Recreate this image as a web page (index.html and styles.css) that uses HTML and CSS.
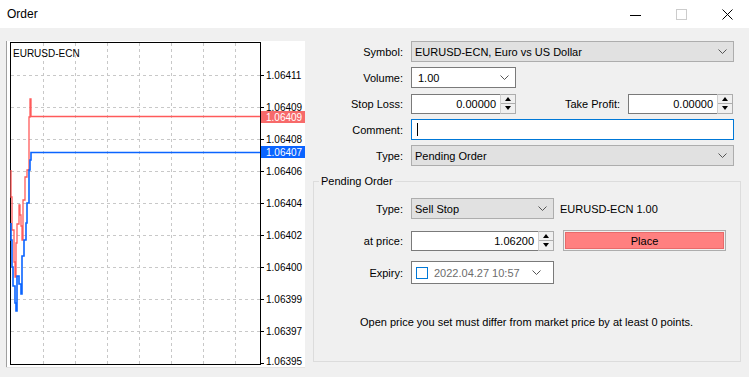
FILE: index.html
```html
<!DOCTYPE html>
<html lang="en">
<head>
    <meta charset="UTF-8">
    <title>Order</title>
    <link rel="stylesheet" href="styles.css">
</head>
<body>
    <div class="titlebar">
        <span class="title">Order</span>
        <div class="controls">
            <span class="ctl"><svg width="11" height="11" viewBox="0 0 11 11"><line x1="0" y1="6.5" x2="11" y2="6.5" stroke="#000" stroke-width="1"/></svg></span>
            <span class="ctl"><svg width="11" height="11" viewBox="0 0 11 11"><rect x="0.5" y="0.5" width="10" height="10" fill="none" stroke="#cccccc"/></svg></span>
            <span class="ctl"><svg width="11" height="11" viewBox="0 0 11 11"><path d="M0.5 0.5L10.5 10.5M10.5 0.5L0.5 10.5" stroke="#000" stroke-width="1"/></svg></span>
        </div>
    </div>

    <div class="main">
        <div class="chart">
            <svg width="299" height="327" viewBox="6 41 299 327">
                <rect x="6" y="41" width="299" height="327" fill="#fff"/>
                <line x1="6.5" y1="41" x2="6.5" y2="368" stroke="#a0a0a0"/>
                <line x1="6" y1="367.5" x2="305" y2="367.5" stroke="#e3e3e3"/>
                <g stroke="#c8c8c8" stroke-dasharray="3 3" shape-rendering="crispEdges">
                    <line x1="43.5" y1="43" x2="43.5" y2="364"/>
                    <line x1="75.5" y1="43" x2="75.5" y2="364"/>
                    <line x1="107.5" y1="43" x2="107.5" y2="364"/>
                    <line x1="139.5" y1="43" x2="139.5" y2="364"/>
                    <line x1="171.5" y1="43" x2="171.5" y2="364"/>
                    <line x1="203.5" y1="43" x2="203.5" y2="364"/>
                    <line x1="235.5" y1="43" x2="235.5" y2="364"/>
                    <line x1="11" y1="75.5" x2="260" y2="75.5"/>
                    <line x1="11" y1="107.5" x2="260" y2="107.5"/>
                    <line x1="11" y1="139.5" x2="260" y2="139.5"/>
                    <line x1="11" y1="171.5" x2="260" y2="171.5"/>
                    <line x1="11" y1="203.5" x2="260" y2="203.5"/>
                    <line x1="11" y1="235.5" x2="260" y2="235.5"/>
                    <line x1="11" y1="267.5" x2="260" y2="267.5"/>
                    <line x1="11" y1="299.5" x2="260" y2="299.5"/>
                    <line x1="11" y1="331.5" x2="260" y2="331.5"/>
                </g>
                <rect x="10.5" y="42.5" width="250" height="322" fill="none" stroke="#000"/>
                <g stroke="#000" shape-rendering="crispEdges">
                    <line x1="261" y1="75.5" x2="264" y2="75.5"/>
                    <line x1="261" y1="107.5" x2="264" y2="107.5"/>
                    <line x1="261" y1="139.5" x2="264" y2="139.5"/>
                    <line x1="261" y1="171.5" x2="264" y2="171.5"/>
                    <line x1="261" y1="203.5" x2="264" y2="203.5"/>
                    <line x1="261" y1="235.5" x2="264" y2="235.5"/>
                    <line x1="261" y1="267.5" x2="264" y2="267.5"/>
                    <line x1="261" y1="299.5" x2="264" y2="299.5"/>
                    <line x1="261" y1="331.5" x2="264" y2="331.5"/>
                    <line x1="261" y1="363.5" x2="264" y2="363.5"/>
                </g>
                <text class="sym" x="13" y="57">EURUSD-ECN</text>
                <g class="axis">
                    <text x="266" y="79">1.06411</text>
                    <text x="266" y="111">1.06409</text>
                    <text x="266" y="143">1.06408</text>
                    <text x="266" y="175">1.06406</text>
                    <text x="266" y="207">1.06404</text>
                    <text x="266" y="239">1.06402</text>
                    <text x="266" y="271">1.06400</text>
                    <text x="266" y="303">1.06399</text>
                    <text x="266" y="335">1.06397</text>
                    <text x="266" y="365">1.06395</text>
                </g>
                <polyline fill="none" stroke="#ff5b5b" stroke-width="1.3" points="11,170 11,197 12,197 12,230 14,230 14,262 15,262 15,277 16,277 16,243 17,243 17,224 19,224 19,205 20,205 20,215 21,215 21,226 22,226 22,240 23,240 23,200 25,200 25,177 27,177 27,170 29,170 29,117 30,117 30,99 31,99 31,116.5 260,116.5"/>
                <polyline fill="none" stroke="#0a64ff" stroke-width="1.6" points="11,223 11,240 12,240 12,267 13,267 13,286 15,286 15,303 16,303 16,311 17,311 17,276 19,276 19,284 21,284 21,294 22,294 22,256 24,256 24,240 26,240 26,223 27,223 27,203 29,203 29,170 30,170 30,160 31,160 31,152.5 260,152.5"/>
                <rect x="261" y="111" width="44" height="12" fill="#f76a6a"/>
                <text class="tag" x="266" y="121">1.06409</text>
                <rect x="261" y="146" width="44" height="12" fill="#0a64ff"/>
                <text class="tag" x="266" y="156">1.06407</text>
            </svg>
        </div>

        <div class="form">
            <div class="row">
                <span class="lbl">Symbol:</span>
                <div class="select wide">
                    <span class="val">EURUSD-ECN, Euro vs US Dollar</span>
                    <svg class="chev" width="9" height="5" viewBox="0 0 9 5"><polyline points="0.5,0.5 4.5,4.5 8.5,0.5" fill="none" stroke="#555"/></svg>
                </div>
            </div>
            <div class="row">
                <span class="lbl">Volume:</span>
                <div class="select combo short">
                    <span class="val">1.00</span>
                    <svg class="chev" width="9" height="5" viewBox="0 0 9 5"><polyline points="0.5,0.5 4.5,4.5 8.5,0.5" fill="none" stroke="#555"/></svg>
                </div>
            </div>
            <div class="row stops">
                <span class="lbl">Stop Loss:</span>
                <div class="spin short">
                    <span class="num">0.00000</span>
                    <div class="arrows"><span class="up"></span><span class="down"></span></div>
                </div>
                <span class="lbl fill">Take Profit:</span>
                <div class="spin short">
                    <span class="num">0.00000</span>
                    <div class="arrows"><span class="up"></span><span class="down"></span></div>
                </div>
            </div>
            <div class="row">
                <span class="lbl">Comment:</span>
                <div class="text-input wide"><span class="caret"></span></div>
            </div>
            <div class="row">
                <span class="lbl">Type:</span>
                <div class="select wide">
                    <span class="val">Pending Order</span>
                    <svg class="chev" width="9" height="5" viewBox="0 0 9 5"><polyline points="0.5,0.5 4.5,4.5 8.5,0.5" fill="none" stroke="#555"/></svg>
                </div>
            </div>

            <fieldset class="pending">
                <legend>Pending Order</legend>
                <div class="row">
                    <span class="lbl">Type:</span>
                    <div class="select mid">
                        <span class="val">Sell Stop</span>
                        <svg class="chev" width="9" height="5" viewBox="0 0 9 5"><polyline points="0.5,0.5 4.5,4.5 8.5,0.5" fill="none" stroke="#555"/></svg>
                    </div>
                    <span class="info">EURUSD-ECN 1.00</span>
                </div>
                <div class="row">
                    <span class="lbl">at price:</span>
                    <div class="spin mid">
                        <span class="num">1.06200</span>
                        <div class="arrows"><span class="up"></span><span class="down"></span></div>
                    </div>
                    <button class="place">Place</button>
                </div>
                <div class="row">
                    <span class="lbl">Expiry:</span>
                    <div class="select combo mid tall expiry">
                        <span class="check"></span>
                        <span class="date">2022.04.27 10:57</span>
                        <svg class="chev" width="9" height="5" viewBox="0 0 9 5"><polyline points="0.5,0.5 4.5,4.5 8.5,0.5" fill="none" stroke="#555"/></svg>
                    </div>
                </div>
                <p class="note">Open price you set must differ from market price by at least 0 points.</p>
            </fieldset>
        </div>
    </div>
</body>
</html>
```

FILE: styles.css
```css
body {
    font-family: "Liberation Sans", Arial, sans-serif;
    font-size: 11px;
    color: #000;
    margin: 0;
    padding: 0;
    width: 749px;
    height: 377px;
    background-color: #f0f0f0;
    overflow: hidden;
}
.titlebar {
    height: 28px;
    background-color: #fff;
    display: flex;
    align-items: center;
    justify-content: space-between;
}
.title {
    margin-left: 7px;
    font-size: 12px;
}
.controls {
    display: flex;
    margin-right: 16px;
    gap: 35px;
}
.ctl {
    display: flex;
    width: 11px;
    height: 11px;
}
.main {
    display: flex;
}
.chart {
    margin-left: 6px;
    margin-top: 13px;
    width: 299px;
    height: 327px;
}
.chart svg {
    display: block;
}
.chart text {
    font-family: "Liberation Sans", Arial, sans-serif;
    font-size: 10px;
}
.chart .tag {
    fill: #fff;
}
.form {
    flex: 1;
    padding-top: 13px;
    display: flex;
    flex-direction: column;
    gap: 5px;
}
.row {
    display: flex;
    align-items: center;
    height: 21px;
}
.row.stops {
    margin-right: 16px;
}
.lbl {
    width: 98px;
    padding-right: 8px;
    text-align: right;
    box-sizing: content-box;
}
.lbl.fill {
    flex: 1;
    width: auto;
}
.select,
.text-input,
.spin {
    box-sizing: border-box;
    height: 21px;
    display: flex;
    align-items: center;
    border: 1px solid #adadad;
}
.select {
    background-color: #e1e1e1;
    padding-left: 3px;
    padding-right: 6px;
}
.select .val {
    flex: 1;
}
.select.combo {
    background-color: #fff;
    border-color: #7a7a7a;
    padding-left: 6px;
}
.select.expiry {
    padding-right: 12px;
}
.wide {
    width: 323px;
}
.short {
    width: 105px;
}
.mid {
    width: 143px;
}
.tall {
    height: 23px;
}
.text-input {
    background-color: #fff;
    border-color: #0078d7;
    padding-left: 5px;
}
.caret {
    width: 1px;
    height: 13px;
    background-color: #000;
}
.spin {
    background-color: #fff;
    border-color: #7a7a7a;
    height: 20px;
}
.spin .num {
    flex: 1;
    text-align: right;
    padding-right: 4px;
}
.arrows {
    width: 16px;
    height: 20px;
    margin-right: -1px;
    box-sizing: border-box;
    border: 1px solid #adadad;
    border-left-color: #d0d0d0;
    background-color: #f0f0f0;
    display: flex;
    flex-direction: column;
}
.arrows span {
    flex: 1;
    position: relative;
}
.arrows .up {
    border-bottom: 1px solid #adadad;
}
.arrows .up::after,
.arrows .down::after {
    content: "";
    position: absolute;
    left: 4px;
    border-left: 3.5px solid transparent;
    border-right: 3.5px solid transparent;
}
.arrows .up::after {
    top: 2px;
    border-bottom: 4px solid #000;
}
.arrows .down::after {
    top: 2px;
    border-top: 4px solid #000;
}
.pending {
    margin: 3px 8px 0 8px;
    padding: 0;
    border: 1px solid #dcdcdc;
    height: 188px;
    box-sizing: border-box;
    display: flex;
    flex-direction: column;
    gap: 11px;
}
.pending legend {
    margin-left: 5px;
    padding: 0 2px;
    line-height: 14px;
}
.pending .lbl {
    width: 89px;
}
.pending .row:first-of-type {
    margin-top: 10px;
}
.info {
    margin-left: 6px;
}
.place {
    margin-left: 9px;
    width: 163px;
    height: 21px;
    font-family: inherit;
    font-size: 11px;
    border: 1px solid #adadad;
    background-color: #ff8080;
    box-shadow: inset 0 0 0 1px #f0f0f0, inset 0 0 0 2px #e86a6a;
    padding: 0;
}
.check {
    width: 10px;
    height: 10px;
    border: 1px solid #0078d7;
    background-color: #fff;
    margin-right: 6px;
    margin-left: -2px;
}
.date {
    flex: 1;
    color: #6d6d6d;
    white-space: nowrap;
}
.note {
    margin: 22px 0 0 46px;
}
```
